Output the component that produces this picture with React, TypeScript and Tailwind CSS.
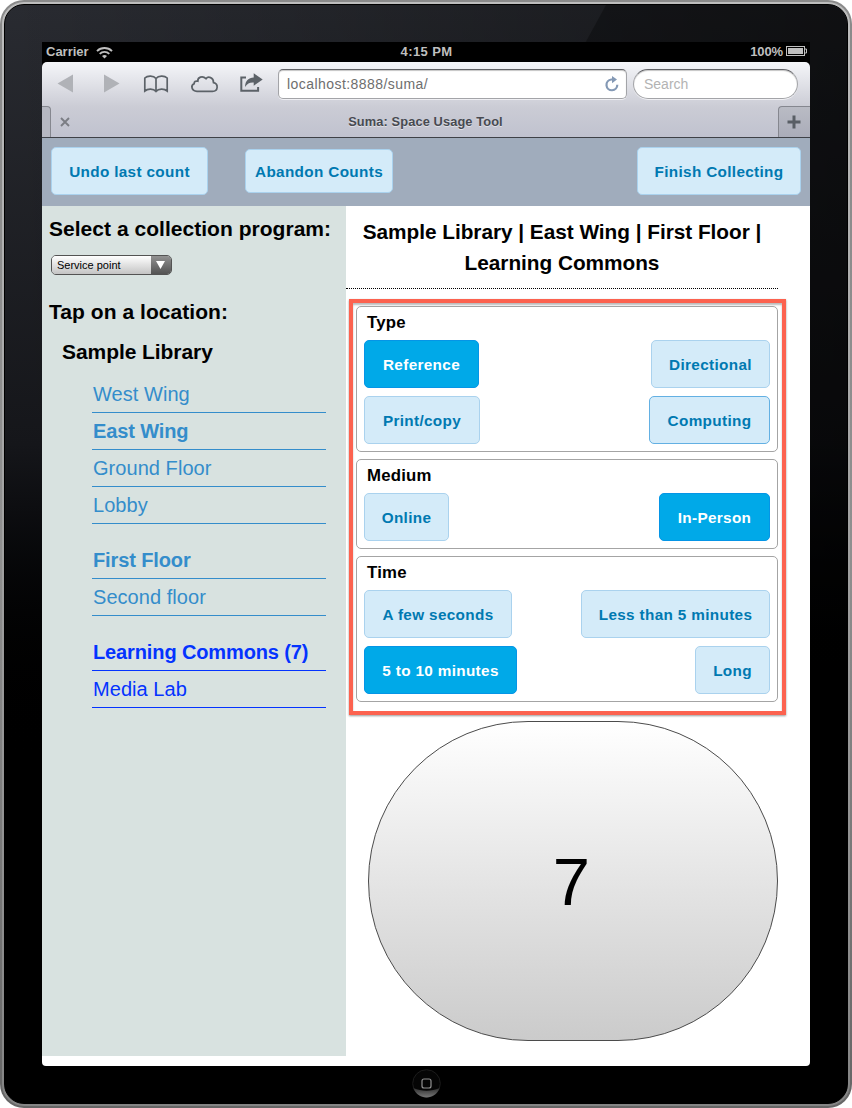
import React from "react";

type Choice = { label: string; width: string; tone?: "on" | "focus" };

const toneClass = {
  off: "border-[#aad2ee] bg-[#d4ebf9] text-[#0079b1]",
  on: "border-[#0595e6] bg-[#00a9e8] text-white",
  focus: "border-[#63b0e3] bg-[#d4ebf9] text-[#0079b1]",
};

function Button({ label, width, tone, height = "h-12" }: Choice & { height?: string }) {
  return (
    <button
      className={`flex ${height} ${width} shrink-0 items-center justify-center rounded-[5px] border pt-[2px] text-[15.3px] font-bold tracking-[0.34px] whitespace-nowrap ${toneClass[tone ?? "off"]}`}
    >
      {label}
    </button>
  );
}

function Group({ title, rows, height }: { title: string; rows: Choice[][]; height: string }) {
  return (
    <section className={`flex ${height} flex-col rounded-[5px] border border-[#a4a4a4] px-[7px]`}>
      <h3 className="h-[33px] pt-[4px] pl-[3px] text-[16.8px] leading-[24px] font-bold tracking-[0.2px]">{title}</h3>
      <div className="flex flex-col gap-2">
        {rows.map((row, i) => (
          <div key={i} className="flex justify-between">
            {row.map((c) => (
              <Button key={c.label} {...c} />
            ))}
          </div>
        ))}
      </div>
    </section>
  );
}

function Place({ label, active, color }: { label: string; active?: boolean; color: string }) {
  return (
    <li
      className={`h-[37px] w-[234px] border-b pt-[6px] pl-px text-[20px] leading-[25px] whitespace-nowrap ${color} ${active ? "font-bold tracking-[-0.12px]" : "tracking-[0.05px]"}`}
    >
      {label}
    </li>
  );
}

function StatusBar() {
  return (
    <div className="flex h-5 items-center bg-black text-[13px] leading-5 font-bold text-[#bfbfbf]">
      <div className="flex flex-1 items-center pl-1">
        <span>Carrier</span>
        <svg className="ml-[7px]" width="17" height="13" viewBox="0 0 17 13" fill="none" stroke="#bfbfbf">
          <path d="M1 5.1a10.8 10.8 0 0 1 15 0" strokeWidth="1.9" />
          <path d="M3.7 7.9a6.8 6.8 0 0 1 9.6 0" strokeWidth="1.9" />
          <path d="M6 10.1a3.6 3.6 0 0 1 5 0L8.5 12.6z" fill="#bfbfbf" stroke="none" />
        </svg>
      </div>
      <span className="tracking-[0.4px]">4:15 PM</span>
      <div className="flex flex-1 items-center justify-end pr-[3px]">
        <span className="tracking-[-0.1px]">100%</span>
        <svg className="mb-[2px] ml-[3px]" width="21" height="10" viewBox="0 0 21 10">
          <rect x=".5" y=".5" width="18" height="9" fill="none" stroke="#bfbfbf" />
          <rect x="2" y="2" width="15" height="6" fill="#bfbfbf" />
          <path d="M19 3h1.5v4H19" fill="none" stroke="#bfbfbf" />
        </svg>
      </div>
    </div>
  );
}

function Toolbar() {
  return (
    <div className="flex h-[45px] items-start rounded-t-[5px] bg-linear-to-b from-[#f5f6f9] to-[#cbccd5]">
      <svg className="mt-2 ml-[10px]" width="220" height="30" viewBox="0 0 220 30" fill="none">
        <path d="M5.5 13.5 21 4.5v18z" fill="#b0b2b7" />
        <path d="M67.500 13.500 52 4.500v18z" fill="#b0b2b7" />
        <g stroke="#5c6268" strokeWidth="1.7">
          <path d="M104 8.500c-2.500-3-8.500-3-11.200-.5v13c3-2.500 8.700-2.500 11.200.5 2.500-3 8.200-3 11.200-.5V8c-2.700-2.500-8.700-2.500-11.200.5zM104 8.500v13" />
          <path d="M145 21.300h15.500c5.800 0 6.200-7.400 1-8.600.2-5.500-5.400-6.800-7.500-4-3.500-3.500-8.500-1.500-8.200 2.500-2.300-.6-3.900.5-3.600 2.600-3.800 1.400-2.800 7.200 2.800 7.500z" />
          <path d="M194 7.500h-4.700v13.200h16.800V17" strokeWidth="2" />
        </g>
        <path d="M193 17c.3-6.300 3.500-9.200 8.700-9.400V3.200l9 6.200-9 6.400v-3.400c-4.200-.2-6.300 1-8.700 4.600z" fill="#5c6268" />
      </svg>
      <div className="mt-[7px] ml-[6px] flex h-[30px] w-[349px] items-center justify-between rounded-[5px] border border-[#a3a4a8] border-t-[#606165] bg-white pr-[6px] pl-2 shadow-[inset_0_1px_1px_#c5c5c5,0_1px_0_#f0f0f4]">
        <span className="text-[14px] tracking-[0.44px] text-[#6e6e6e]">localhost:8888/suma/</span>
        <svg width="16" height="18" viewBox="0 0 16 18" fill="none">
          <path d="M9.300 4.500H7.300a5.400 5.400 0 1 0 6 5.300" stroke="#8499b5" strokeWidth="2.200" />
          <path d="M8 1l5 3.500-5 3.800z" fill="#8499b5" />
        </svg>
      </div>
      <div className="mt-[7px] ml-[6px] flex h-[30px] w-[165px] items-center rounded-full border border-[#a3a4a8] border-t-[#606165] bg-white pl-[10px] text-[14px] text-[#b3b3b3] shadow-[inset_0_1px_1px_#c5c5c5,0_1px_0_#f0f0f4]">
        Search
      </div>
    </div>
  );
}

function TabStrip() {
  return (
    <div className="flex h-[31px] items-stretch border-b border-[#3e4147] bg-linear-to-b from-[#cbccd5] to-[#c0c2cf]">
      <div className="mt-[-1px] w-[9px] rounded-tr-[4px] border-t border-r border-[#85878f] bg-[#b6b8c2]" />
      <div className="flex w-7 items-center justify-center pb-px">
        <svg width="10" height="10" viewBox="0 0 10 10" stroke="#7b7d84" strokeWidth="1.900">
          <path d="M1 1l8 8M9 1L1 9" />
        </svg>
      </div>
      <div className="flex flex-1 items-center justify-center pr-[6px] text-[12.800px] font-bold tracking-[0.12px] text-[#474a51] [text-shadow:0_1px_0_#e0e1e7]">
        <span>Suma: Space Usage Tool</span>
      </div>
      <div className="mt-[-1px] flex w-8 items-center justify-center rounded-tl-[4px] border-t border-l border-[#85878f] bg-linear-to-b from-[#b9bbc4] to-[#aaacb9] pr-px">
        <svg width="14" height="14" viewBox="0 0 14 14" stroke="#595e65" strokeWidth="3">
          <path d="M7 .5v13M.5 7h13" />
        </svg>
      </div>
    </div>
  );
}

const blue = "border-[#348dcb] text-[#348dcb]";
const deepBlue = "border-[#0433ff] text-[#0433ff]";

function Sidebar() {
  return (
    <aside className="h-[850px] w-[304px] shrink-0 bg-[#d8e2e0]">
      <h2 className="pt-[9px] pl-[7px] text-[21px] leading-[28px] font-bold tracking-[0.03px] whitespace-nowrap">
        Select a collection program:
      </h2>
      <div className="mt-3 ml-[9px] flex h-5 w-[121px] overflow-hidden rounded-[5px] border border-[#535353] text-[11px] text-black">
        <div className="flex flex-1 items-center bg-linear-to-b from-white to-[#c4c4c4] pl-[5px]">Service point</div>
        <div className="flex w-5 items-center justify-center bg-linear-to-b from-[#929292] to-[#535353] pr-px">
          <svg width="9" height="8" viewBox="0 0 9 8">
            <path d="M0 0h9L4.500 8z" fill="white" />
          </svg>
        </div>
      </div>
      <h2 className="mt-[23px] pl-[7px] text-[21px] leading-[28px] font-bold tracking-[0.05px]">Tap on a location:</h2>
      <h2 className="mt-3 pl-5 text-[21px] leading-[28px] font-bold tracking-[-0.07px]">Sample Library</h2>
      <ul className="mt-[10px] ml-[50px]">
        <Place label="West Wing" color={blue} />
        <Place label="East Wing" active color={blue} />
        <Place label="Ground Floor" color={blue} />
        <Place label="Lobby" color={blue} />
      </ul>
      <ul className="mt-[18px] ml-[50px]">
        <Place label="First Floor" active color={blue} />
        <Place label="Second floor" color={blue} />
      </ul>
      <ul className="mt-[18px] ml-[50px]">
        <Place label="Learning Commons (7)" active color={deepBlue} />
        <Place label="Media Lab" color={deepBlue} />
      </ul>
    </aside>
  );
}

export default function App() {
  return (
    <div className="flex h-[1108px] w-[852px] bg-white font-['Liberation_Sans',Arial,sans-serif] text-black">
      <div className="flex w-full rounded-[24px] bg-linear-to-b from-[#8a8a8a] via-[#8f8f8f] to-[#666] p-[2px]">
        <div className="flex w-full rounded-[22px] bg-linear-to-b from-[#bdbdbd] via-[#a0a0a0] to-[#858585] p-[2px]">
          <div className="relative flex w-full flex-col overflow-hidden rounded-[20px] border border-black bg-linear-to-b from-[#292b31] via-[#15161a] via-40% to-black to-70% px-[37px] pt-[37px]">
            <svg className="absolute top-0 left-0" width="842" height="1098" viewBox="0 0 842 1098">
              <defs>
                <linearGradient id="shade" x1="0" y1="0" x2="1" y2="0">
                  <stop offset="0" stopColor="#000" stopOpacity="0" />
                  <stop offset="1" stopColor="#000" stopOpacity=".45" />
                </linearGradient>
              </defs>
              <path d="M0 0h842v1098H0z" fill="url(#shade)" />
              <path d="M601 0h241v1098H0z" fill="#000" fillOpacity=".3" />
            </svg>
            <div className="relative flex h-[1024px] w-[768px] flex-col overflow-hidden rounded-b-[4px] bg-black">
              <StatusBar />
              <Toolbar />
              <TabStrip />
              <header className="flex h-[68px] shrink-0 items-center px-[9px] pb-[2px] bg-[#a0acbc]">
                <Button label="Undo last count" width="w-[157px]" />
                <div className="ml-[37px]">
                  <Button label="Abandon Counts" width="w-[148px]" height="h-[44px]" />
                </div>
                <div className="ml-auto">
                  <Button label="Finish Collecting" width="w-[164px]" />
                </div>
              </header>
              <div className="flex flex-1 bg-white">
                <Sidebar />
                <main className="w-[464px]">
                  <h1 className="h-[83px] w-[432px] border-b border-dotted border-black pt-[10px] text-center text-[20.800px] leading-[31px] font-bold tracking-[-0.03px]">
                    Sample Library | East Wing | First Floor |<br />
                    Learning Commons
                  </h1>
                  <div className="mt-[10px] ml-[3px] flex h-[416px] w-[437px] flex-col gap-[7px] border-4 border-[#fc624f] pt-[3px] pr-1 pl-[3px] shadow-[0_1px_2px_#999,inset_0_2px_2px_#bbb]">
                    <Group
                      title="Type"
                      height="h-[146px]"
                      rows={[
                        [
                          { label: "Reference", width: "w-[115px]", tone: "on" },
                          { label: "Directional", width: "w-[119px]" },
                        ],
                        [
                          { label: "Print/copy", width: "w-[116px]" },
                          { label: "Computing", width: "w-[121px]", tone: "focus" },
                        ],
                      ]}
                    />
                    <Group
                      title="Medium"
                      height="h-[90px]"
                      rows={[
                        [
                          { label: "Online", width: "w-[85px]" },
                          { label: "In-Person", width: "w-[111px]", tone: "on" },
                        ],
                      ]}
                    />
                    <Group
                      title="Time"
                      height="h-[146px]"
                      rows={[
                        [
                          { label: "A few seconds", width: "w-[148px]" },
                          { label: "Less than 5 minutes", width: "w-[189px]" },
                        ],
                        [
                          { label: "5 to 10 minutes", width: "w-[153px]", tone: "on" },
                          { label: "Long", width: "w-[75px]" },
                        ],
                      ]}
                    />
                  </div>
                  <button className="mt-[6px] ml-[22px] flex h-[320px] w-[410px] items-center justify-center rounded-[160px] border border-[#4b4b4b] bg-linear-to-b from-white to-[#cbcbcb] pr-[3px] text-[67px] leading-none">
                    7
                  </button>
                </main>
              </div>
            </div>
            <div className="relative mt-[2px] flex justify-center">
              <svg width="30" height="30" viewBox="0 0 30 30" fill="none">
                <defs>
                  <linearGradient id="home" x1="0" y1="0" x2="0" y2="1">
                    <stop offset="0" stopColor="#303030" />
                    <stop offset="1" stopColor="#777" />
                  </linearGradient>
                </defs>
                <circle cx="15.500" cy="15.500" r="13.800" fill="#050505" stroke="#1c1c1c" />
                <path d="M2.500 20c8 3.500 18 3.500 26 0C26.500 26 21 29.500 15.500 29.500S4.500 26 2.500 20z" fill="url(#home)" />
                <rect x="11" y="11" width="9" height="9" rx="2" stroke="#929292" strokeWidth="1.200" />
              </svg>
            </div>
          </div>
        </div>
      </div>
    </div>
  );
}
